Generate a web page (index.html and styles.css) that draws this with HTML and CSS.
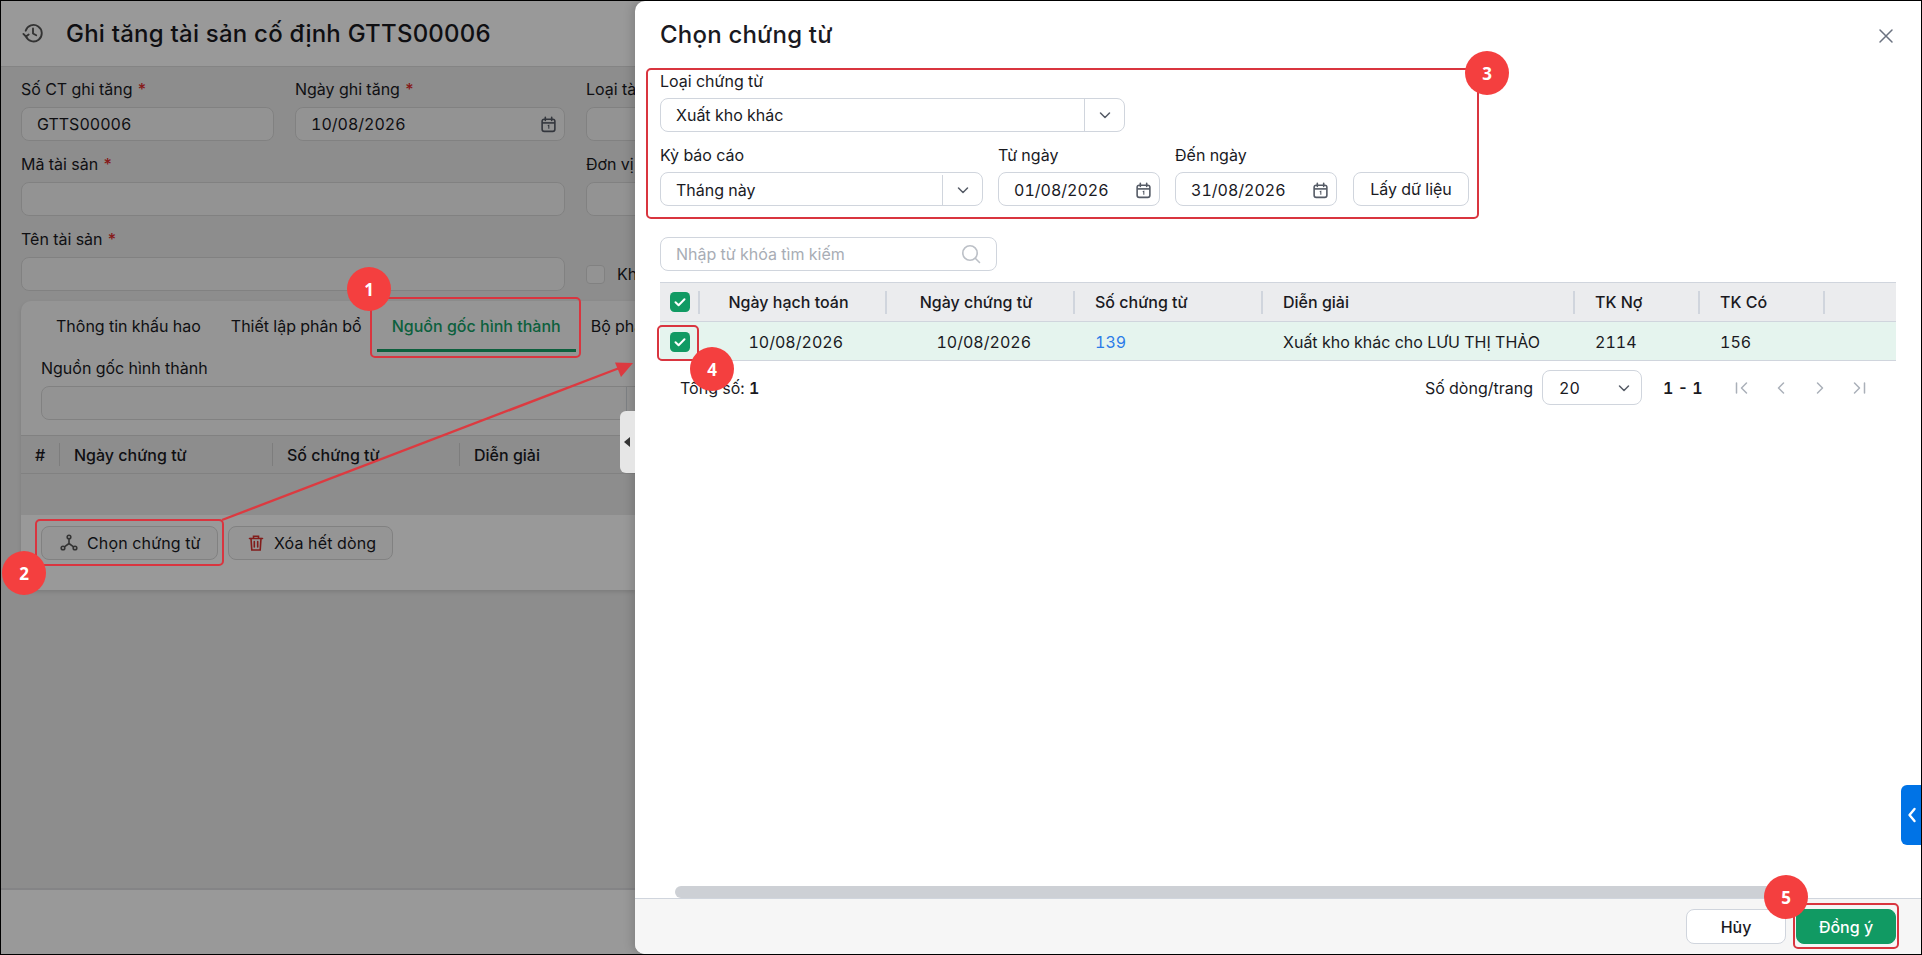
FILE: index.html
```html
<!DOCTYPE html>
<html lang="vi">
<head>
    <meta charset="UTF-8">
    <meta name="viewport" content="width=device-width, initial-scale=1.0">
    <title>Ghi tăng tài sản cố định</title>
    <link rel="stylesheet" href="styles.css">
</head>
<body>
    <svg class="icon-defs" aria-hidden="true">
        <symbol id="i-cal" viewBox="0 0 16 16">
            <rect x="2" y="3" width="12" height="11.5" rx="2" fill="none" stroke="currentColor" stroke-width="1.5"/>
            <path d="M2 6.5h12" stroke="currentColor" stroke-width="1.5"/>
            <path d="M5 1.2v3M11 1.2v3" stroke="currentColor" stroke-width="1.5" stroke-linecap="round"/>
            <path d="M7.3 9.2l1-.5v3.4" fill="none" stroke="currentColor" stroke-width="1"/>
        </symbol>
        <symbol id="i-chev" viewBox="0 0 14 14">
            <path d="M2.5 5l4.5 4.5L11.5 5" fill="none" stroke="currentColor" stroke-width="1.5" stroke-linecap="round" stroke-linejoin="round"/>
        </symbol>
        <symbol id="i-check" viewBox="0 0 20 20">
            <rect width="20" height="20" rx="4.5" fill="#119a63"/>
            <path d="M5.5 10.2l3.1 3 5.9-6" fill="none" stroke="#fff" stroke-width="2" stroke-linecap="round" stroke-linejoin="round"/>
        </symbol>
    </svg>

    <div class="screen">
        <header class="page-head">
            <svg class="history-icon" viewBox="0 0 24 24">
                <path d="M4.200 15.500A9 9 0 1 0 4 9.500" fill="none" stroke="currentColor" stroke-width="2" stroke-linecap="round"/>
                <path d="M12 7v5.500l3.500 2" fill="none" stroke="currentColor" stroke-width="2" stroke-linecap="round" stroke-linejoin="round"/>
                <path d="M1.500 13l2.800 2.800 3-2.200" fill="none" stroke="currentColor" stroke-width="2" stroke-linecap="round" stroke-linejoin="round"/>
            </svg>
            <h1>Ghi tăng tài sản cố định GTTS00006</h1>
        </header>

        <main class="page-body">
            <div class="asset-form">
                <div class="field">
                    <label>Số CT ghi tăng <b>*</b></label>
                    <div class="box">GTTS00006</div>
                </div>
                <div class="field">
                    <label>Ngày ghi tăng <b>*</b></label>
                    <div class="box">10/08/2026<svg class="cal"><use href="#i-cal"/></svg></div>
                </div>
                <div class="field clip">
                    <label>Loại tài sản <b>*</b></label>
                    <div class="box open-right"></div>
                </div>
                <div class="field span-2">
                    <label>Mã tài sản <b>*</b></label>
                    <div class="box"></div>
                </div>
                <div class="field clip">
                    <label>Đơn vị sử dụng <b>*</b></label>
                    <div class="box open-right"></div>
                </div>
                <div class="field span-2">
                    <label>Tên tài sản <b>*</b></label>
                    <div class="box"></div>
                </div>
                <div class="field-check clip">
                    <span class="check-empty"></span>
                    <span>Khấu hao</span>
                </div>
            </div>

            <section class="tab-card">
                <nav class="tabs">
                    <span class="tab">Thông tin khấu hao</span>
                    <span class="tab">Thiết lập phân bổ</span>
                    <span class="tab active">Nguồn gốc hình thành</span>
                    <span class="tab">Bộ phận sử dụng</span>
                </nav>
                <div class="field source-field">
                    <label>Nguồn gốc hình thành</label>
                    <div class="box source-box"><span class="select-btn"></span></div>
                </div>
                <div class="source-head">
                    <span class="col-no">#</span>
                    <span class="col-date">Ngày chứng từ</span>
                    <span class="col-num">Số chứng từ</span>
                    <span class="col-desc">Diễn giải</span>
                </div>
                <div class="source-empty"></div>
                <div class="source-actions">
                    <button class="btn action-pick">
                        <svg class="btn-icon" viewBox="0 0 18 18">
                            <g fill="none" stroke="#555" stroke-width="1.6">
                                <circle cx="9" cy="3" r="1.8"/>
                                <circle cx="3" cy="14" r="1.8"/>
                                <circle cx="15" cy="14" r="1.8"/>
                                <path d="M9 5v4.500M9 9.500l-4.600 3.300M9 9.500l4.600 3.300"/>
                            </g>
                        </svg>
                        Chọn chứng từ
                    </button>
                    <button class="btn action-clear">
                        <svg class="btn-icon" viewBox="0 0 18 18">
                            <g fill="none" stroke="#d9302c" stroke-width="1.6" stroke-linecap="round">
                                <path d="M2.500 4.500h13M6.500 4.500V2.200h5v2.300"/>
                                <path d="M4 4.500l.8 11.500h8.400l.8-11.500"/>
                                <path d="M7.300 7.500v5.500M10.700 7.500v5.500"/>
                            </g>
                        </svg>
                        Xóa hết dòng
                    </button>
                </div>
            </section>
        </main>

        <footer class="page-foot"></footer>

        <div class="overlay"></div>

        <aside class="modal">
            <span class="collapse-handle"></span>

            <div class="modal-head">
                <h2>Chọn chứng từ</h2>
                <svg class="close-icon" viewBox="0 0 16 16">
                    <path d="M2 2l12 12M14 2L2 14" stroke="currentColor" stroke-width="1.5" stroke-linecap="round"/>
                </svg>
            </div>

            <div class="filters">
                <div class="filter-row">
                    <div class="field w-type">
                        <label>Loại chứng từ</label>
                        <div class="box lit select">
                            <span class="select-text">Xuất kho khác</span>
                            <span class="select-btn"><svg><use href="#i-chev"/></svg></span>
                        </div>
                    </div>
                </div>
                <div class="filter-row">
                    <div class="field w-period">
                        <label>Kỳ báo cáo</label>
                        <div class="box lit select">
                            <span class="select-text">Tháng này</span>
                            <span class="select-btn"><svg><use href="#i-chev"/></svg></span>
                        </div>
                    </div>
                    <div class="field w-date">
                        <label>Từ ngày</label>
                        <div class="box lit">01/08/2026<svg class="cal"><use href="#i-cal"/></svg></div>
                    </div>
                    <div class="field w-date">
                        <label>Đến ngày</label>
                        <div class="box lit">31/08/2026<svg class="cal"><use href="#i-cal"/></svg></div>
                    </div>
                    <button class="btn lit fetch-btn">Lấy dữ liệu</button>
                </div>
            </div>

            <div class="box lit search">
                <span>Nhập từ khóa tìm kiếm</span>
                <svg class="search-icon" viewBox="0 0 20 20">
                    <circle cx="9" cy="9" r="7.200" fill="none" stroke="currentColor" stroke-width="1.6"/>
                    <path d="M14.500 14.500l4 4" stroke="currentColor" stroke-width="1.6" stroke-linecap="round"/>
                </svg>
            </div>

            <div class="grid-table">
                <div class="grid-row grid-head">
                    <span class="cell"><svg class="check"><use href="#i-check"/></svg></span>
                    <span class="cell center">Ngày hạch toán</span>
                    <span class="cell center">Ngày chứng từ</span>
                    <span class="cell">Số chứng từ</span>
                    <span class="cell">Diễn giải</span>
                    <span class="cell">TK Nợ</span>
                    <span class="cell">TK Có</span>
                    <span class="cell last"></span>
                </div>
                <div class="grid-row grid-selected">
                    <span class="cell"><svg class="check"><use href="#i-check"/></svg></span>
                    <span class="cell date">10/08/2026</span>
                    <span class="cell date">10/08/2026</span>
                    <span class="cell link">139</span>
                    <span class="cell">Xuất kho khác cho LƯU THỊ THẢO</span>
                    <span class="cell">2114</span>
                    <span class="cell">156</span>
                    <span class="cell last"></span>
                </div>
            </div>

            <div class="pager">
                <span class="total">Tổng số: <b>1</b></span>
                <span class="per-page">Số dòng/trang</span>
                <div class="box lit page-size">20<svg><use href="#i-chev"/></svg></div>
                <b class="range">1 - 1</b>
                <div class="pager-icons">
                    <svg viewBox="0 0 16 16"><path d="M2.500 3v10M12.500 3l-5 5 5 5" fill="none" stroke="currentColor" stroke-width="1.5" stroke-linecap="round" stroke-linejoin="round"/></svg>
                    <svg viewBox="0 0 16 16"><path d="M10.500 3l-5 5 5 5" fill="none" stroke="currentColor" stroke-width="1.5" stroke-linecap="round" stroke-linejoin="round"/></svg>
                    <svg viewBox="0 0 16 16"><path d="M5.500 3l5 5-5 5" fill="none" stroke="currentColor" stroke-width="1.5" stroke-linecap="round" stroke-linejoin="round"/></svg>
                    <svg viewBox="0 0 16 16"><path d="M13.500 3v10M3.500 3l5 5-5 5" fill="none" stroke="currentColor" stroke-width="1.5" stroke-linecap="round" stroke-linejoin="round"/></svg>
                </div>
            </div>

            <div class="modal-spacer"></div>
            <div class="scroll-thumb"></div>

            <div class="modal-foot">
                <button class="btn lit foot-btn">Hủy</button>
                <button class="btn foot-btn primary">Đồng ý</button>
            </div>
        </aside>

        <span class="side-handle">
            <svg viewBox="0 0 10 16"><path d="M7.500 2L2.500 8l5 6" fill="none" stroke="#fff" stroke-width="2.4" stroke-linecap="round" stroke-linejoin="round"/></svg>
        </span>

        <!-- huong dan: khung do, mui ten, so thu tu -->
        <svg class="guide-arrow" viewBox="0 0 1922 955">
            <path d="M222 520L622 367" stroke="#dc3a40" stroke-width="2.4" fill="none"/>
            <path d="M633 363L615 362.500L621 377Z" fill="#dc3a40"/>
        </svg>
        <span class="mark mark-1"></span>
        <span class="mark mark-2"></span>
        <span class="mark mark-3"></span>
        <span class="mark mark-4"></span>
        <span class="mark mark-5"></span>
        <span class="badge badge-1">1</span>
        <span class="badge badge-2">2</span>
        <span class="badge badge-3">3</span>
        <span class="badge badge-4">4</span>
        <span class="badge badge-5">5</span>
    </div>
</body>
</html>
```

FILE: styles.css
```css
* {
    box-sizing: border-box;
}
html, body {
    margin: 0;
    padding: 0;
}
body {
    font-family: Inter, "Noto Sans", sans-serif;
    font-size: 16px;
    font-variant-numeric: tabular-nums;
    color: #1a1a1f;
}
.icon-defs {
    display: none;
}
.screen {
    position: relative;
    width: 1922px;
    height: 955px;
    overflow: hidden;
    display: flex;
    flex-direction: column;
    background: #ebebeb;
}
/* black frame of the screenshot */
.screen::after {
    content: "";
    position: absolute;
    inset: 0;
    border: 1px solid #000;
    z-index: 100;
    pointer-events: none;
}

/* page behind the dialog */
.page-head {
    height: 67px;
    flex: none;
    display: flex;
    align-items: center;
    padding-left: 22px;
    background: #fff;
    border-bottom: 1px solid #ddd;
}
.history-icon {
    width: 22px;
    height: 22px;
    color: #555;
    margin-right: 22px;
}
.page-head h1 {
    margin: 0;
    font-size: 24px;
    font-weight: 500;
    font-variant-numeric: normal;
    letter-spacing: 0.23px;
}
.page-body {
    flex: 1;
    padding: 12px 21px 0;
}
.page-foot {
    height: 67px;
    flex: none;
    background: #fff;
    border-top: 2px solid #dcdde0;
}
.overlay {
    position: absolute;
    inset: 0;
    background: rgba(0, 0, 0, 0.4);
    z-index: 10;
}
.asset-form {
    display: grid;
    grid-template-columns: 253px 270px 49px;
    column-gap: 21px;
    row-gap: 13px;
}
.span-2 {
    grid-column: span 2;
}
.clip {
    overflow: hidden;
}
.open-right {
    width: 300px;
}
.field label {
    display: block;
    height: 20px;
    line-height: 20px;
    margin-bottom: 8px;
    white-space: nowrap;
}
.field label b {
    color: #e02a2a;
    font-weight: 500;
}
.box {
    position: relative;
    height: 34px;
    display: flex;
    align-items: center;
    padding: 0 15px;
    background: #f6f6f6;
    border: 1px solid #d8d8d8;
    border-radius: 8px;
    white-space: nowrap;
}
.box.lit {
    background: #fff;
    border-color: #d0d5dd;
}
.cal {
    width: 17px;
    height: 17px;
    color: #555b66;
    margin-left: auto;
    margin-right: -8px;
}
.field-check {
    display: flex;
    align-items: center;
    gap: 12px;
    padding-top: 28px;
    white-space: nowrap;
}
.check-empty {
    width: 19px;
    height: 19px;
    flex: none;
    border: 1px solid #d8d8d8;
    border-radius: 4px;
    background: #f6f6f6;
}

/* tab card */
.tab-card {
    margin-top: 10px;
    width: 614px;
    height: 289px;
    overflow: hidden;
    border-radius: 10px 0 0 0;
    background: #f9f9f9;
    box-shadow: 0 2px 4px rgba(0, 0, 0, 0.12);
}
.tabs {
    display: flex;
    height: 51px;
    padding-left: 20px;
}
.tab {
    display: flex;
    align-items: center;
    height: 100%;
    padding: 2px 15px 0;
    border-bottom: 3px solid transparent;
    white-space: nowrap;
}
.tab.active {
    color: #14a067;
    font-weight: 500;
    border-bottom-color: #14a067;
}
.source-field {
    padding: 6px 0 0 20px;
}
.source-box {
    height: 34px;
    width: 626px;
    padding-right: 0;
}
.source-head {
    display: flex;
    height: 39px;
    margin-top: 15px;
    align-items: center;
    background: #ebebeb;
    border-top: 1px solid #d8d8d8;
    border-bottom: 1px solid #d8d8d8;
    font-weight: 500;
    white-space: nowrap;
}
.source-head span {
    display: flex;
    align-items: center;
    flex: none;
    height: 23px;
    padding-left: 14px;
    border-right: 1px solid #d0d0d0;
}
.source-head .col-no {
    width: 39px;
}
.source-head .col-date {
    width: 213px;
}
.source-head .col-num {
    width: 187px;
}
.source-head .col-desc {
    width: 300px;
}
.source-empty {
    height: 41px;
    background: #ebebeb;
}
.source-actions {
    display: flex;
    gap: 10px;
    padding: 11px 20px;
    background: #fff;
    height: 75px;
}
.btn {
    display: inline-flex;
    align-items: center;
    justify-content: center;
    height: 34px;
    padding: 0 16px;
    background: #f9f9f9;
    border: 1px solid #d8d8d8;
    border-radius: 8px;
    font: inherit;
    color: inherit;
    white-space: nowrap;
}
.action-pick, .action-clear {
    justify-content: flex-start;
    padding: 0 0 0 18px;
    letter-spacing: 0.15px;
}
.action-pick {
    width: 177px;
}
.action-clear {
    width: 165px;
}
.btn-icon {
    width: 18px;
    height: 18px;
    margin-right: 9px;
}
.btn.lit {
    background: #fff;
    border-color: #d0d5dd;
}

/* dialog */
.modal {
    position: absolute;
    left: 635px;
    top: 1px;
    right: 1px;
    bottom: 1px;
    z-index: 20;
    display: flex;
    flex-direction: column;
    background: #fff;
    border-radius: 10px 0 0 10px;
    box-shadow: -3px 0 10px rgba(0, 0, 0, 0.15);
}
.collapse-handle {
    position: absolute;
    left: -15px;
    top: 410px;
    width: 15px;
    height: 62px;
    background: #e6e6e6;
    border-radius: 6px 0 0 6px;
}
.collapse-handle::after {
    content: "";
    position: absolute;
    left: 4px;
    top: 26px;
    border-style: solid;
    border-width: 5px 6px 5px 0;
    border-color: transparent #333 transparent transparent;
}
.modal-head {
    height: 70px;
    flex: none;
    display: flex;
    justify-content: space-between;
    padding: 18px 27px 0 25px;
}
.modal-head h2 {
    margin: 0;
    font-size: 24px;
    line-height: 32px;
    font-weight: 500;
    letter-spacing: 0.2px;
}
.close-icon {
    width: 16px;
    height: 16px;
    margin-top: 9px;
    color: #6b7280;
}
.filters {
    padding: 0 25px;
    display: flex;
    flex-direction: column;
    gap: 13px;
}
.filter-row {
    display: flex;
    align-items: flex-end;
    gap: 15px;
}
.filters .field label {
    margin-bottom: 7px;
}
.w-type {
    width: 465px;
}
.w-period {
    width: 323px;
}
.w-date {
    width: 162px;
}
.w-period .box, .w-date .box {
    padding-top: 2px;
}
.fetch-btn {
    width: 116px;
    margin-left: 1px;
    padding: 0;
}
.select {
    padding-right: 0;
}
.select-btn {
    margin-left: auto;
    width: 40px;
    height: 100%;
    display: flex;
    align-items: center;
    justify-content: center;
    border-left: 1px solid #d0d5dd;
    color: #555b66;
}
.select-btn svg, .page-size svg {
    width: 14px;
    height: 14px;
}
.search {
    flex: none;
    margin: 31px 0 0 25px;
    width: 337px;
    color: #a8adb5;
}
.search-icon {
    width: 20px;
    height: 20px;
    margin-left: auto;
    color: #bcc0c7;
}
.grid-table {
    margin: 11px 25px 0;
    width: 1236px;
    flex: none;
}
.grid-row {
    display: grid;
    grid-template-columns: 40px 187px 188px 188px 312px 125px 125px 71px;
    align-items: center;
    border-bottom: 1px solid #d0d5dd;
}
.grid-head {
    height: 40px;
    background: #ebecee;
    border-top: 1px solid #d0d5dd;
    font-weight: 500;
}
.grid-selected {
    height: 39px;
    padding-top: 1px;
    background: #e5f4ee;
}
.cell {
    display: block;
    padding-left: 20px;
    white-space: nowrap;
}
.cell:first-child {
    padding-left: 10px;
    height: 20px;
}
.grid-head .cell {
    height: 23px;
    line-height: 23px;
    border-right: 2px solid #d0d5dd;
}
.grid-head .cell:first-child {
    display: flex;
    align-items: center;
}
.grid-head .cell.last {
    border-right: 0;
}
.grid-head .center {
    padding: 0 8px 0 0;
    text-align: center;
}
.date {
    padding: 0 44px 0 0;
    text-align: right;
}
.link {
    color: #2b7be8;
}
.check {
    display: block;
    width: 20px;
    height: 20px;
}
.pager {
    flex: none;
    display: flex;
    align-items: center;
    margin: 9px 25px 0 0;
    padding-left: 45px;
}
.total b, .range {
    font-weight: 600;
}
.per-page {
    margin-left: auto;
    margin-right: 9px;
}
.page-size {
    width: 100px;
    height: 35px;
    padding: 0 10px 0 16px;
    justify-content: space-between;
    color: inherit;
}
.page-size svg {
    color: #555b66;
}
.range {
    width: 38px;
    margin-left: 21px;
    margin-right: 33px;
    white-space: nowrap;
}
.pager-icons {
    display: flex;
    gap: 23px;
    padding-right: 29px;
    color: #aab0b9;
}
.pager-icons svg {
    width: 16px;
    height: 16px;
}
.modal-spacer {
    flex: 1;
}
.scroll-thumb {
    flex: none;
    height: 12px;
    width: 1115px;
    margin-left: 40px;
    background: #cdd0d5;
    border-radius: 6px 0 0 6px;
}
.modal-foot {
    flex: none;
    height: 56px;
    display: flex;
    justify-content: flex-end;
    gap: 10px;
    padding: 10px 25px 0 0;
    background: #f6f6f6;
    border-top: 1px solid #d0d5dd;
    border-radius: 0 0 0 10px;
}
.foot-btn {
    width: 100px;
    height: 35px;
    padding: 0;
    font-weight: 500;
}
.primary {
    background: #119a63;
    border-color: #119a63;
    color: #fff;
}
.side-handle {
    position: absolute;
    right: 0;
    top: 785px;
    width: 21px;
    height: 60px;
    z-index: 25;
    display: flex;
    align-items: center;
    justify-content: center;
    background: #0073e6;
    border-radius: 6px 0 0 6px;
}
.side-handle svg {
    width: 10px;
    height: 16px;
}

/* guide marks drawn over the screenshot */
.guide-arrow {
    position: absolute;
    inset: 0;
    width: 1922px;
    height: 955px;
    z-index: 30;
    pointer-events: none;
}
.mark {
    position: absolute;
    z-index: 31;
    border: 2px solid #d9353f;
    border-radius: 5px;
}
.mark-1 {
    left: 370px;
    top: 297px;
    width: 211px;
    height: 61px;
}
.mark-2 {
    left: 35px;
    top: 519px;
    width: 189px;
    height: 47px;
}
.mark-3 {
    left: 646px;
    top: 68px;
    width: 833px;
    height: 151px;
}
.mark-4 {
    left: 657px;
    top: 325px;
    width: 42px;
    height: 36px;
}
.mark-5 {
    left: 1793px;
    top: 903px;
    width: 106px;
    height: 46px;
}
.badge {
    position: absolute;
    z-index: 32;
    width: 44px;
    height: 44px;
    display: flex;
    align-items: center;
    justify-content: center;
    background: #f43f3f;
    border-radius: 50%;
    color: #fff;
    font-family: "Open Sans", sans-serif;
    font-size: 17px;
    font-weight: 700;
}
.badge-1 {
    left: 347px;
    top: 267px;
}
.badge-2 {
    left: 2px;
    top: 551px;
}
.badge-3 {
    left: 1465px;
    top: 51px;
}
.badge-4 {
    left: 690px;
    top: 347px;
}
.badge-5 {
    left: 1764px;
    top: 875px;
}
```
